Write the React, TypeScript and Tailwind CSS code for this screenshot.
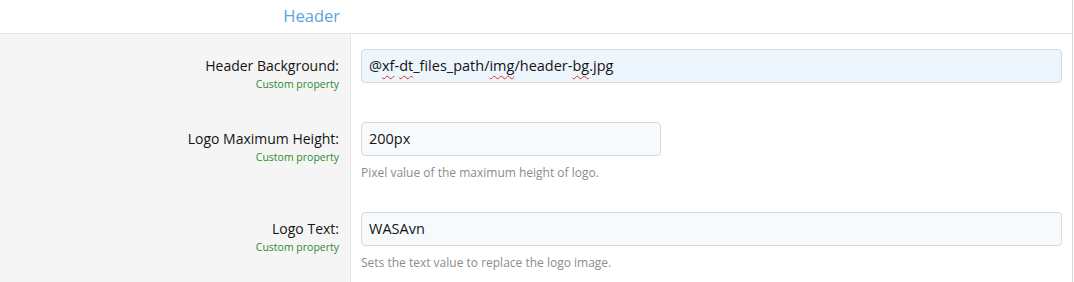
import React from "react";

const font = { fontFamily: '"Open Sans", "Noto Sans", sans-serif' };

function Sq({ children }: { children: React.ReactNode }) {
  return (
    <span className="underline decoration-wavy decoration-[#e0312f] decoration-1 underline-offset-[4px]">
      {children}
    </span>
  );
}

function Row({
  label,
  value,
  explain,
  wide,
  focused,
}: {
  label: string;
  value: React.ReactNode;
  explain?: string;
  wide?: boolean;
  focused?: boolean;
}) {
  return (
    <div className="flex">
      <div className="w-[351px] shrink-0 bg-[#f5f5f5] border-r border-[#e5e5e5] pr-[11px] pt-[22px] text-right">
        <div className="text-[14px] leading-[20px] text-[#141414]">{label}</div>
        <div className="text-[10.5px] leading-[16px] text-[#2d8a2d]">Custom property</div>
      </div>
      <div className="flex-1 pl-[10px] pr-[10px] pt-[15px] pb-[15px]">
        <div
          className={`h-[34px] rounded-[4px] border border-[#d8d8d8] px-[7px] flex items-center text-[14.5px] text-[#141414] ${
            wide ? "w-full" : "w-[300px]"
          } ${focused ? "bg-[#edf5fd]" : "bg-[#f7fafd]"}`}
        >
          {value}
        </div>
        {explain ? (
          <div className="mt-[8px] text-[12px] leading-[18px] text-[#8c8c8c]">{explain}</div>
        ) : (
          <div className="h-[9px]" />
        )}
      </div>
    </div>
  );
}

export default function App() {
  return (
    <div style={font} className="w-[1073px] h-[282px] bg-white border-r border-[#d8d8d8] overflow-hidden">
      <div className="h-[34px] border-b border-[#e5e5e5] flex">
        <div className="w-[351px] pr-[11px] text-right text-[16.5px] leading-[32px] text-[#5ba4dd]">Header</div>
      </div>
      <Row
        label="Header Background:"
        wide
        focused
        value={
          <span>
            @<Sq>xf</Sq>-<Sq>dt</Sq>_files_path/<Sq>img</Sq>/header-<Sq>bg</Sq>.jpg
          </span>
        }
      />
      <Row label="Logo Maximum Height:" value="200px" explain="Pixel value of the maximum height of logo." />
      <Row label="Logo Text:" wide value="WASAvn" explain="Sets the text value to replace the logo image." />
    </div>
  );
}
